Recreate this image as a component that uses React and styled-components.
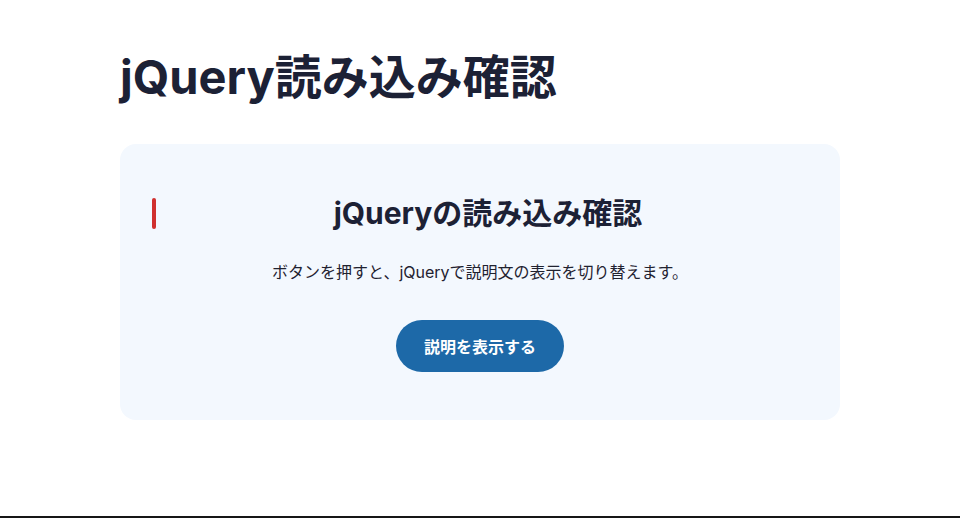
import styled, { createGlobalStyle } from "styled-components";

const Global = createGlobalStyle`
  * { box-sizing: border-box; }
  body {
    margin: 0;
    background: #fff;
    font-family: "Inter", "Noto Sans CJK JP", sans-serif;
    color: #1c2135;
  }
`;

const Main = styled.main`
  min-height: 516px;
  width: 720px;
  margin: 0 auto;
  padding-top: 50px;
`;

const Title = styled.h1`
  margin: 0 0 40px;
  font-size: 47px;
  line-height: 54px;
  font-weight: 700;
  letter-spacing: 0;
`;

const Card = styled.section`
  background: #f3f8fe;
  border-radius: 16px;
  padding: 52px 32px 48px;
  text-align: center;
`;

const Heading = styled.h2`
  position: relative;
  margin: 0 0 29px;
  padding-left: 16px;
  font-size: 30px;
  line-height: 34px;
  font-weight: 700;

  &::before {
    content: "";
    position: absolute;
    left: 0;
    top: 2px;
    width: 4px;
    height: 31px;
    border-radius: 2px;
    background: #d0302f;
  }
`;

const Lead = styled.p`
  margin: 0 0 34px;
  font-size: 16px;
  line-height: 27px;
  color: #1f2230;
`;

const Button = styled.button`
  height: 52px;
  padding: 0 28px;
  border: 0;
  border-radius: 26px;
  background: #1d69a8;
  color: #fff;
  font-family: inherit;
  font-size: 16px;
  font-weight: 700;
  cursor: pointer;
`;

const Footer = styled.footer`
  border-top: 2px solid #161616;
`;

export default function App() {
  return (
    <>
      <Global />
      <Main>
        <Title>jQuery読み込み確認</Title>
        <Card>
          <Heading>jQueryの読み込み確認</Heading>
          <Lead>ボタンを押すと、jQueryで説明文の表示を切り替えます。</Lead>
          <Button>説明を表示する</Button>
        </Card>
      </Main>
      <Footer />
    </>
  );
}
